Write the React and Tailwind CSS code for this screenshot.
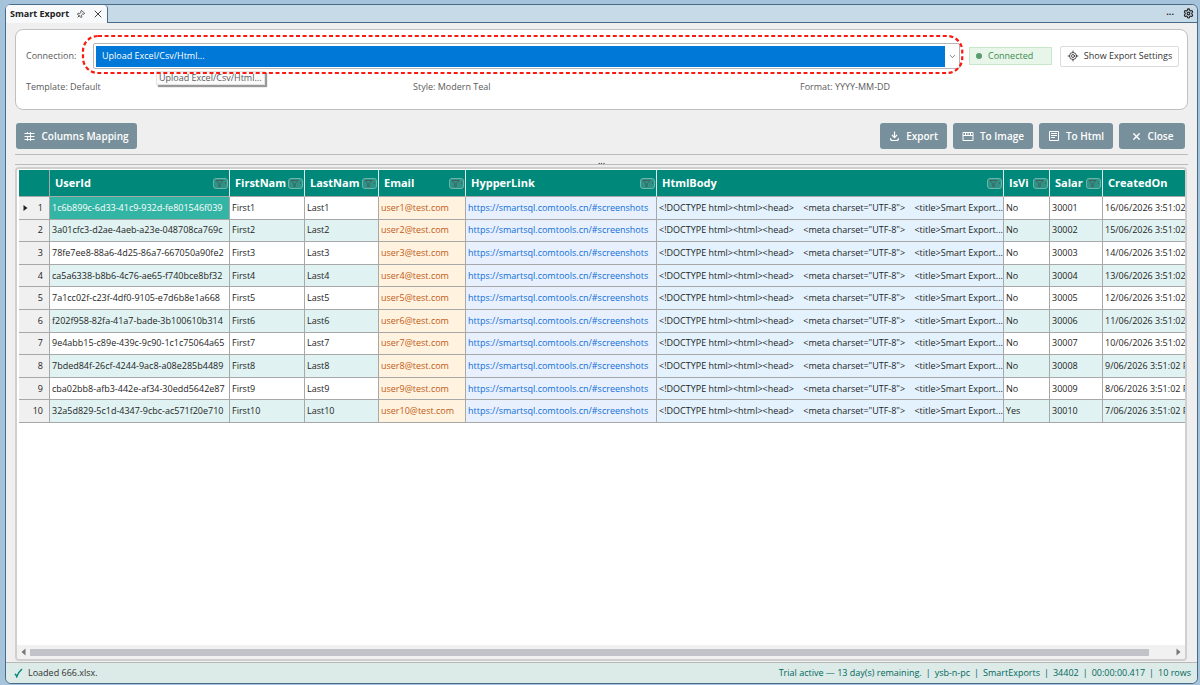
import { Pin, X, Settings, LocateFixed, ChevronDown } from 'lucide-react';

const columns = [
  { key: 'id', label: 'UserId', width: 'w-[180px]', filter: true },
  { key: 'first', label: 'FirstNam', width: 'w-[75px]', filter: true },
  { key: 'last', label: 'LastNam', width: 'w-[74px]', filter: true },
  { key: 'email', label: 'Email', width: 'w-[87px]', filter: true },
  { key: 'link', label: 'HypperLink', width: 'w-[191px]', filter: true },
  { key: 'html', label: 'HtmlBody', width: 'w-[347px]', filter: true },
  { key: 'visible', label: 'IsVi', width: 'w-[46px]', filter: true },
  { key: 'salary', label: 'Salar', width: 'w-[53px]', filter: true },
  { key: 'created', label: 'CreatedOn', width: 'w-[110px]', filter: false },
];

const userIds = [
  '1c6b899c-6d33-41c9-932d-fe801546f039',
  '3a01cfc3-d2ae-4aeb-a23e-048708ca769c',
  '78fe7ee8-88a6-4d25-86a7-667050a90fe2',
  'ca5a6338-b8b6-4c76-ae65-f740bce8bf32',
  '7a1cc02f-c23f-4df0-9105-e7d6b8e1a668',
  'f202f958-82fa-41a7-bade-3b100610b314',
  '9e4abb15-c89e-439c-9c90-1c1c75064a65',
  '7bded84f-26cf-4244-9ac8-a08e285b4489',
  'cba02bb8-afb3-442e-af34-30edd5642e87',
  '32a5d829-5c1d-4347-9cbc-ac571f20e710',
];

const rows = userIds.map((id, i) => ({
  id,
  first: `First${i + 1}`,
  last: `Last${i + 1}`,
  email: `user${i + 1}@test.com`,
  visible: i === 9 ? 'Yes' : 'No',
  salary: 30001 + i,
  created: `${16 - i}/06/2026 3:51:02 PM`,
}));

const htmlBody =
  '<!DOCTYPE html><html><head>    <meta charset="UTF-8">    <title>Smart Export...';

const statusItems = [
  'Trial active — 13 day(s) remaining.',
  'ysb-n-pc',
  'SmartExports',
  '34402',
  '00:00:00.417',
  '10 rows',
];

const cell = 'border-r border-b border-[#a8a8a8] px-[2px] overflow-hidden whitespace-pre';

const FilterButton = ({ label }) => (
  <button
    type="button"
    aria-label={`Filter ${label}`}
    className="flex h-[11px] w-[15px] shrink-0 items-center justify-center rounded-[3px] border border-[#6cb5ab] bg-[#2d9386]"
  >
    <svg
      width="13"
      height="9"
      viewBox="0 0 13 9"
      fill="none"
      stroke="#46605e"
      className="shrink-0"
    >
      <path d="M2 1.5h7L6.2 4.5v3H4.8v-3z" />
      <path d="M11.5 3.5v1.5" />
    </svg>
  </button>
);

const ToolButton = ({ icon, width, children }) => (
  <button
    type="button"
    className={`${width} flex h-[26px] items-center justify-center gap-[6px] rounded-[3px] bg-[#78909c] text-[10px] font-semibold whitespace-nowrap text-white`}
  >
    {icon}
    {children}
  </button>
);

const ColumnsIcon = () => (
  <svg width="11" height="11" viewBox="0 0 11 11" stroke="currentColor" fill="none">
    <path d="M0.5 2.5h10M0.5 5.5h10M0.5 8.5h10" />
    <path d="M3.5 1v1.5M3.5 5.5v4.5M6.5 1v9" strokeWidth="0.9" />
  </svg>
);

const ExportIcon = () => (
  <svg width="11" height="11" viewBox="0 0 11 11" stroke="currentColor" fill="none">
    <path d="M5.5 0.5v6M3 4l2.5 2.6L8 4" strokeWidth="1.2" />
    <path d="M1.5 7.2q0 2.3 2 2.3h4q2 0 2-2.3" strokeWidth="1.2" />
  </svg>
);

const ImageIcon = () => (
  <svg width="12" height="11" viewBox="0 0 12 11" stroke="currentColor" fill="none">
    <path d="M1 1.5h10v8H1zM1 4.5h10M3.5 1v3.5M6 1v3.5M8.5 1v3.5" />
  </svg>
);

const HtmlIcon = () => (
  <svg width="12" height="12" viewBox="0 0 12 12" stroke="currentColor" fill="none">
    <path d="M1.5 1.5h9v9h-9zM3 3.5h6M3 5.5h6M3 7.5h4" />
  </svg>
);

const Toolbar = () => (
  <div className="flex h-[44px] items-center gap-[6px] pt-[8px] pr-[3px] pl-px">
    <ToolButton icon={<ColumnsIcon />} width="w-[121px]">
      Columns Mapping
    </ToolButton>
    <div className="flex-1" />
    <ToolButton icon={<ExportIcon />} width="w-[67px]">
      Export
    </ToolButton>
    <ToolButton icon={<ImageIcon />} width="w-[80px]">
      To Image
    </ToolButton>
    <ToolButton icon={<HtmlIcon />} width="w-[74px]">
      To Html
    </ToolButton>
    <ToolButton icon={<X size={11} strokeWidth={3} />} width="w-[66px]">
      Close
    </ToolButton>
  </div>
);

const ConnectionCard = () => (
  <section className="h-[81px] rounded-lg border border-[#c0c0c0] bg-white text-[#5a5a5a]">
    <div className="flex items-center pt-[13px] pr-2 pl-[10px]">
      <label htmlFor="connection" className="w-[67px]">
        Connection:
      </label>
      <div className="relative flex h-[26px] flex-1 items-center rounded-[2px] border border-[#b5b5b5] bg-white p-[2px]">
        <select
          id="connection"
          className="h-[21px] flex-1 appearance-none bg-[#0078d7] px-[6px] text-white"
        >
          <option>Upload Excel/Csv/Html...</option>
        </select>
        <ChevronDown size={9} className="ml-[3px]" />
        <div className="absolute top-[27px] left-[62px] border border-[#e4e4e4] bg-[#fafafa] px-[2px] leading-[12px] whitespace-nowrap shadow-[2px_2px_1px_#999]">
          Upload Excel/Csv/Html...
        </div>
        {/* red highlight */}
        <svg className="pointer-events-none absolute -top-[9px] -left-[12px] h-[39px] w-[calc(100%+16px)] overflow-visible">
          <rect
            x="1"
            y="1"
            width="99.8%"
            height="37"
            rx="15"
            fill="none"
            stroke="#fb1a10"
            strokeWidth="2.2"
            strokeDasharray="4 2.6"
          />
        </svg>
      </div>
      <div className="ml-[9px] flex h-[18px] w-[83px] items-center gap-[6px] border border-[#c8e6c9] bg-[#e8f5e9] px-[6px] text-[#3d8b54]">
        <span className="h-[6px] w-[6px] rounded-full bg-[#5a9b70]" />
        Connected
      </div>
      <button
        type="button"
        className="ml-[8px] flex h-[21px] w-[119px] items-center justify-center gap-[5px] rounded-[2px] border border-[#dcdcdc] bg-white whitespace-nowrap text-[#333]"
      >
        <LocateFixed size={12} strokeWidth={1.7} />
        Show Export Settings
      </button>
    </div>
    <div className="grid grid-cols-3 pt-[12px] pl-[10px]">
      <span>Template: Default</span>
      <span>Style: Modern Teal</span>
      <span>Format: YYYY-MM-DD</span>
    </div>
  </section>
);

const DataGrid = () => (
  <div className="mt-[2px] mr-px flex flex-1 flex-col overflow-hidden rounded-[4px] border-2 border-[#cfcfcf] bg-white">
    <div className="flex-1 overflow-hidden pt-px pl-[2px]">
      <table className="h-[253px] w-[1194px] table-fixed border-separate border-spacing-0 text-[#1e1e1e]">
        <thead>
          <tr className="h-[27px]">
            <td className="w-[31px] border-r border-b border-[#a8a8a8] bg-[#00897b]" />
            {columns.map((c) => (
              <th
                key={c.key}
                className={`${c.width} border-r border-b border-r-[#dfe9e7] border-b-[#a8a8a8] bg-[#00897b] p-0 text-left text-[11px] font-bold text-white`}
              >
                <div className="flex items-center justify-between pr-px pl-[5px]">
                  {c.label}
                  {c.filter && <FilterButton label={c.label} />}
                </div>
              </th>
            ))}
          </tr>
        </thead>
        <tbody>
          {rows.map((r, i) => (
            <tr key={r.id} className={i % 2 ? 'bg-[#e0f2f1]' : 'bg-white'}>
              <td className={`${cell} bg-[#f0f0f0]`}>
                <div className="flex items-center justify-end gap-[10px] pr-1">
                  {i === 0 && (
                    <svg width="5" height="8" viewBox="0 0 5 8" fill="#222">
                      <path d="M0.5 1v6L4.5 4z" />
                    </svg>
                  )}
                  {i + 1}
                </div>
              </td>
              <td className={`${cell} ${i === 0 ? 'bg-[#33b5a5] text-white' : ''}`}>{r.id}</td>
              <td className={cell}>{r.first}</td>
              <td className={cell}>{r.last}</td>
              <td className={`${cell} bg-[#fff3e0] text-[#bf5a14]`}>{r.email}</td>
              <td className={`${cell} bg-[#e8f0fe]`}>
                <a href="https://smartsql.comtools.cn/#screenshots" className="text-[#0f6fd6]">
                  https://smartsql.comtools.cn/#screenshots
                </a>
              </td>
              <td className={`${cell} bg-[#e3f2fd]`}>{htmlBody}</td>
              <td className={cell}>{r.visible}</td>
              <td className={cell}>{r.salary}</td>
              <td className={cell}>{r.created}</td>
            </tr>
          ))}
        </tbody>
      </table>
    </div>
    <div className="flex h-[14px] items-center gap-[4px] bg-[#f1f1f1] px-[4px] text-[#777]">
      <svg width="5" height="8" viewBox="0 0 5 8" fill="currentColor">
        <path d="M4.5 0.5v7L0.5 4z" />
      </svg>
      <div className="flex flex-1">
        <div className="h-[7px] w-[98%] bg-[#c2c3c9]" />
      </div>
      <svg width="5" height="8" viewBox="0 0 5 8" fill="currentColor">
        <path d="M0.5 0.5v7L4.5 4z" />
      </svg>
    </div>
  </div>
);

export default function App() {
  return (
    <div className="flex min-h-screen flex-col bg-[#a5c4dc] pt-1 pr-[2px] pb-px pl-[5px] font-['Open_Sans','Noto_Sans',sans-serif] text-[9px] leading-[12px]">
      <div className="flex flex-1 flex-col rounded-md border border-[#4a6b88] bg-[#efefef]">
        <header className="flex h-[18px] items-center rounded-t-md border-b border-[#4a6b88] bg-[#c7dae8] text-[#222]">
          <div className="-mb-px flex h-[18px] items-center gap-[7px] rounded-t-sm border-r border-[#4a6b88] bg-[#f8f9fa] pr-[3px] pl-1 font-bold">
            Smart Export
            <Pin size={9} className="rotate-45" />
            <X size={12} strokeWidth={1.7} />
          </div>
          <div className="flex-1" />
          <span className="mr-[9px] font-bold">···</span>
          <Settings size={11} strokeWidth={2.4} className="mr-[3px]" />
        </header>
        <main className="flex flex-1 flex-col px-[9px] pt-[6px]">
          <ConnectionCard />
          <Toolbar />
          <div className="h-[11px] border-y border-[#bbb] text-center leading-[12px]">...</div>
          <DataGrid />
        </main>
        <footer className="mt-px flex h-[21px] items-center rounded-b-md border-t border-[#b8b8b8] bg-[#dceae8] pr-[6px] pl-2 text-[#333]">
          <svg width="9" height="10" viewBox="0 0 9 10" className="mr-[5px]">
            <path
              d="M0.8 6Q2 6.3 2.8 8.6Q4.5 4 8 1"
              fill="none"
              stroke="#00897b"
              strokeWidth="1.5"
            />
          </svg>
          Loaded 666.xlsx.
          <div className="ml-auto flex gap-1 text-[#00695c]">
            {statusItems.map((item, i) => (
              <span key={item} className="flex gap-1">
                {i > 0 && <span>|</span>}
                {item}
              </span>
            ))}
          </div>
        </footer>
      </div>
    </div>
  );
}
